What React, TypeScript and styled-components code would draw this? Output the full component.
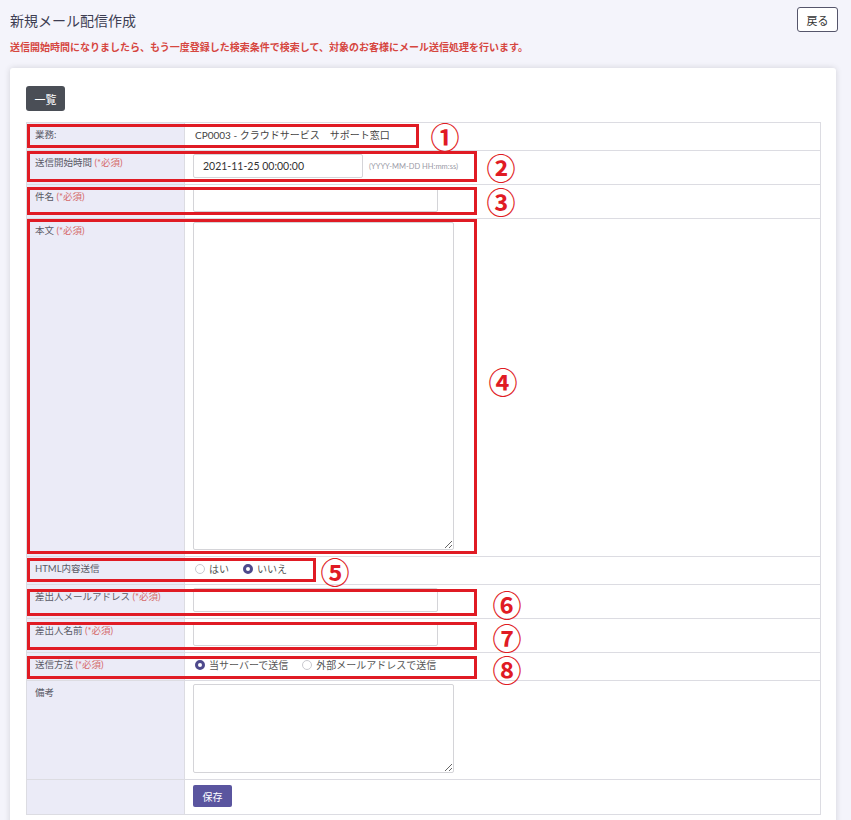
import React from "react";
import styled, { createGlobalStyle } from "styled-components";

const GlobalStyle = createGlobalStyle`
  html, body {
    margin: 0;
    background: #f4f4fb;
    font-family: Lato, "Noto Sans CJK JP", sans-serif;
    color: #444;
  }
  body {
    padding: 7px 13px 0 10px;
  }
`;

const HeaderRow = styled.div`
  display: flex;
  align-items: center;
  justify-content: space-between;
  height: 25px;
`;

const Title = styled.h1`
  margin: 0;
  font-size: 14px;
  font-weight: 400;
  color: #3d3d52;
`;

const BackButton = styled.button`
  width: 41px;
  height: 25px;
  border: 1px solid #55556b;
  border-radius: 3px;
  background: #fff;
  font-family: inherit;
  font-size: 11px;
  color: #333;
  padding: 0;
`;

const Notice = styled.p`
  margin: 9px 0 0;
  font-size: 10px;
  line-height: 12px;
  font-weight: 700;
  color: #d6463f;
`;

const Card = styled.div`
  margin: 15px 2px 0 0;
  background: #fff;
  border-radius: 3px;
  box-shadow: 0 0 6px rgba(0, 0, 0, 0.14);
  padding: 18px 15px 20px 16px;
`;

const ListButton = styled.button`
  height: 25px;
  width: 39px;
  border: 0;
  border-radius: 3px;
  background: #4a4e56;
  color: #fff;
  font-family: inherit;
  font-size: 11px;
  padding: 0;
`;

const Table = styled.div`
  margin-top: 11px;
  border: 1px solid #dcdce2;
  border-top: 0;
`;

const Row = styled.div`
  position: relative;
  display: grid;
  grid-template-columns: 158px 1fr;
  border-top: 1px solid #dcdce2;
`;

const Label = styled.div`
  background: #ebebf7;
  border-right: 1px solid #dcdce2;
  padding: 4px 8px;
  font-size: 9.5px;
  line-height: 15px;
  color: #5a5a66;
`;

const Required = styled.span`
  color: #d56a6a;
`;

const Value = styled.div`
  display: flex;
  align-items: center;
  align-self: start;
  gap: 6px;
  padding: 3px 7px 6px 8px;
  min-height: 18px;
  font-size: 10px;
  color: #444;
`;

const Text = styled.span`
  line-height: 18px;
  padding-left: 2px;
`;

const Input = styled.input<{ $w: number }>`
  box-sizing: border-box;
  width: ${(p) => p.$w}px;
  height: 24px;
  border: 1px solid #d4d4d8;
  border-radius: 2px;
  padding: 0 9px;
  font-family: inherit;
  font-size: 10.5px;
  color: #333;
  margin: 0;
`;

const Hint = styled.span`
  font-size: 7.5px;
  color: #9a9aa6;
`;

const TextArea = styled.textarea<{ $h: number }>`
  box-sizing: border-box;
  display: block;
  width: 261px;
  height: ${(p) => p.$h}px;
  border: 1px solid #d4d4d8;
  border-radius: 2px;
  margin: 0;
  resize: both;
`;

const RadioGroup = styled.label`
  display: inline-flex;
  align-items: center;
  gap: 4px;
  margin-right: 6px;
  line-height: 18px;
  color: #555;
`;

const Radio = styled.input.attrs({ type: "radio" })`
  appearance: none;
  box-sizing: border-box;
  width: 10px;
  height: 10px;
  margin: 0 0 0 2px;
  border-radius: 50%;
  border: 1px solid #c9c9cf;
  background: #fff;
  &:checked {
    border: 3px solid #4e4a8c;
  }
`;

const SaveButton = styled.button`
  height: 22px;
  width: 39px;
  border: 0;
  border-radius: 2px;
  background: #5a559f;
  color: #fff;
  font-family: inherit;
  font-size: 10px;
  padding: 0;
  margin-top: 2px;
  margin-bottom: 1px;
`;

const Mark = styled.div<{ $top: number; $h: number; $w: number }>`
  position: absolute;
  left: 0;
  top: ${(p) => p.$top}px;
  width: ${(p) => p.$w}px;
  height: ${(p) => p.$h}px;
  box-sizing: border-box;
  border: 3px solid #e01b24;
  pointer-events: none;
  z-index: 2;
`;

const Num = styled.span<{ $x: number; $y: number }>`
  position: absolute;
  left: ${(p) => p.$x}px;
  top: ${(p) => p.$y}px;
  transform: translate(-50%, -50%);
  font-family: "Noto Sans CJK JP", sans-serif;
  font-weight: 700;
  font-size: 29px;
  line-height: 1;
  color: #e01b24;
  z-index: 2;
`;

type Note = { top: number; h: number; w: number; n: string; x: number; y: number };

const Annotation = ({ note }: { note: Note }) => (
  <>
    <Mark $top={note.top} $h={note.h} $w={note.w} />
    <Num $x={note.x} $y={note.y}>
      {note.n}
    </Num>
  </>
);

const Req = () => <Required>(*必須)</Required>;

const App = () => {
  return (
    <>
      <GlobalStyle />
      <HeaderRow>
        <Title>新規メール配信作成</Title>
        <BackButton>戻る</BackButton>
      </HeaderRow>
      <Notice>
        送信開始時間になりましたら、もう一度登録した検索条件で検索して、対象のお客様にメール送信処理を行います。
      </Notice>
      <Card>
        <ListButton>一覧</ListButton>
        <Table>
          <Row>
            <Label>業務:</Label>
            <Value>
              <Text>CP0003 - クラウドサービス　サポート窓口</Text>
            </Value>
            <Annotation note={{ top: 1, h: 24, w: 392, n: "①", x: 418, y: 13 }} />
          </Row>
          <Row>
            <Label>
              送信開始時間 <Req />
            </Label>
            <Value>
              <Input $w={170} defaultValue="2021-11-25 00:00:00" />
              <Hint>(YYYY-MM-DD HH:mm:ss)</Hint>
            </Value>
            <Annotation note={{ top: 0, h: 31, w: 450, n: "②", x: 474, y: 16 }} />
          </Row>
          <Row>
            <Label>
              件名 <Req />
            </Label>
            <Value>
              <Input $w={245} />
            </Value>
            <Annotation note={{ top: 2, h: 28, w: 450, n: "③", x: 474, y: 16 }} />
          </Row>
          <Row>
            <Label>
              本文 <Req />
            </Label>
            <Value>
              <TextArea $h={328} />
            </Value>
            <Annotation note={{ top: 0, h: 335, w: 450, n: "④", x: 476, y: 162 }} />
          </Row>
          <Row>
            <Label>HTML内容送信</Label>
            <Value>
              <RadioGroup>
                <Radio name="html" />
                はい
              </RadioGroup>
              <RadioGroup>
                <Radio name="html" defaultChecked />
                いいえ
              </RadioGroup>
            </Value>
            <Annotation note={{ top: 1, h: 24, w: 289, n: "⑤", x: 308, y: 14 }} />
          </Row>
          <Row>
            <Label>
              差出人メールアドレス <Req />
            </Label>
            <Value>
              <Input $w={245} />
            </Value>
            <Annotation note={{ top: 4, h: 27, w: 450, n: "⑥", x: 480, y: 19 }} />
          </Row>
          <Row>
            <Label>
              差出人名前 <Req />
            </Label>
            <Value>
              <Input $w={245} />
            </Value>
            <Annotation note={{ top: 3, h: 28, w: 450, n: "⑦", x: 480, y: 18 }} />
          </Row>
          <Row>
            <Label>
              送信方法 <Req />
            </Label>
            <Value>
              <RadioGroup>
                <Radio name="method" defaultChecked />
                当サーバーで送信
              </RadioGroup>
              <RadioGroup>
                <Radio name="method" />
                外部メールアドレスで送信
              </RadioGroup>
            </Value>
            <Annotation note={{ top: 3, h: 23, w: 450, n: "⑧", x: 480, y: 16 }} />
          </Row>
          <Row>
            <Label>備考</Label>
            <Value>
              <TextArea $h={89} />
            </Value>
          </Row>
          <Row>
            <Label />
            <Value>
              <SaveButton>保存</SaveButton>
            </Value>
          </Row>
        </Table>
      </Card>
    </>
  );
};

export default App;
